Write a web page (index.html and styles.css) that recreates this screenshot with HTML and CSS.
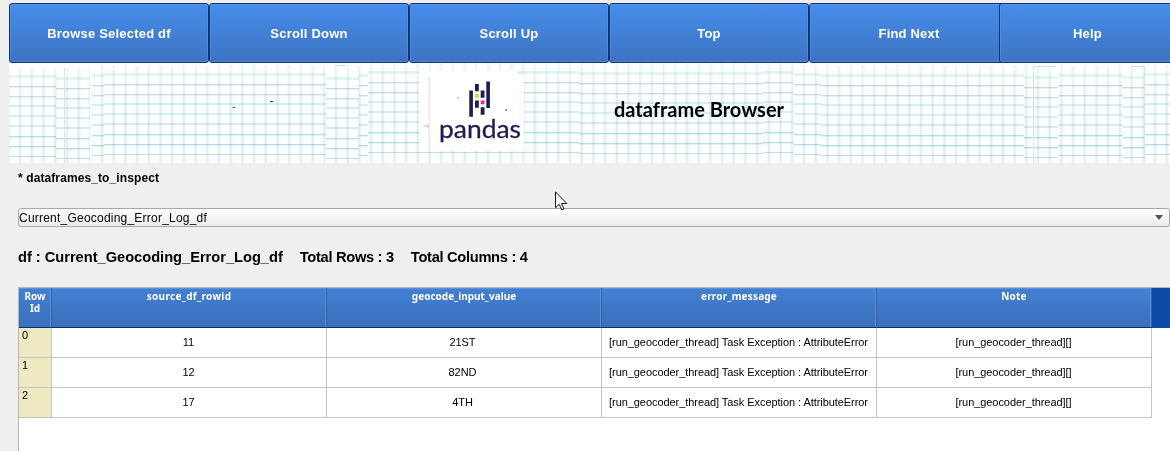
FILE: index.html
```html
<!DOCTYPE html>
<html lang="en">
<head>
<meta charset="utf-8">
<title>dataframe Browser</title>
<link rel="stylesheet" href="styles.css">
</head>
<body>
<nav class="toolbar">
  <button class="tool">Browse Selected df</button>
  <button class="tool">Scroll Down</button>
  <button class="tool">Scroll Up</button>
  <button class="tool">Top</button>
  <button class="tool">Find Next</button>
  <button class="tool tool-last">Help</button>
</nav>
<header class="banner">
  <svg class="paper" width="1161" height="100" viewBox="9 63 1161 100">
    <defs>
      <pattern id="cols" width="23.4" height="100" x="112" y="63" patternUnits="userSpaceOnUse">
        <rect width="23.4" height="100" fill="#fcfefe"/>
        <rect x="0" width="3.500" height="100" fill="#eef6f5"/>
        <rect x="1" width="1.300" height="100" fill="#dbebe8"/>
        <rect x="11.7" width="3.500" height="100" fill="#f1f5f6"/>
        <rect x="12.7" width="1.300" height="100" fill="#dfe6e8"/>
      </pattern>
      <linearGradient id="tint" x1="0" y1="0" x2="0" y2="1">
        <stop offset="0" stop-color="#fff" stop-opacity=".5"/>
        <stop offset=".4" stop-color="#f4fdff" stop-opacity=".15"/>
        <stop offset="1" stop-color="#f0fffb" stop-opacity=".15"/>
      </linearGradient>
      <symbol id="rows" width="600" height="100" viewBox="0 0 600 100" preserveAspectRatio="none">
        <path d="M0 9h600v3H0z" fill="#e6f6f6"/>
        <path d="M0 20h600v1H0z" fill="#d0dade"/>
        <path d="M0 21h600v1H0zM0 31h600v1H0z" fill="#eff4f5"/>
        <path d="M0 30h600v1H0z" fill="#d4dee2"/>
        <path d="M0 39h600v2H0z" fill="#daf0f7"/>
        <path d="M0 49h600v2H0z" fill="#dbf2f6"/>
        <path d="M0 59h600v2H0z" fill="#dfecf1"/>
        <path d="M0 70h600v1H0z" fill="#b8e0ee"/>
        <path d="M0 80h600v1H0z" fill="#bbdeeb"/>
        <path d="M0 71h600v1H0zM0 81h600v1H0z" fill="#e8f6fa"/>
        <path d="M0 90h600v1H0z" fill="#ccdee4"/>
      </symbol>
      <clipPath id="c1"><path d="M9 68h47v95H9z"/></clipPath>
      <clipPath id="c2"><path d="M56 68h34v95H56zM326 66h33v97h-33zM1024 66h34v97h-34zM1123 66h22v97h-22z"/></clipPath>
      <clipPath id="c3"><path d="M92 65h12v98H92zM359 65h9v98h-9zM821 65h203v98H821zM1058 65h65v98h-65z"/></clipPath>
      <clipPath id="c4"><path d="M104 65h222v98H104zM794 65h27v98h-27zM1145 65h25v98h-25z"/></clipPath>
      <clipPath id="c5"><path d="M368 63h211v100H368zM763 63h30v100h-30z"/></clipPath>
      <clipPath id="c6"><path d="M579 63h184v100H579z"/></clipPath>
    </defs>
    <rect x="9" y="63" width="1161" height="100" fill="#fff"/>
    <path d="M9 68h81v95H9zM92 65h276v98H92zM368 63h426v100H368zM794 65h376v98H794z" fill="url(#cols)"/>
    <rect x="9" y="63" width="1161" height="100" fill="url(#tint)"/>
    <g class="lines">
      <g clip-path="url(#c1)"><use href="#rows" x="0" y="66"/></g>
      <g clip-path="url(#c2)"><use href="#rows" x="0" y="68"/><use href="#rows" x="600" y="67"/></g>
      <g clip-path="url(#c3)"><use href="#rows" x="0" y="65"/><use href="#rows" x="600" y="65"/></g>
      <g clip-path="url(#c4)"><use href="#rows" x="0" y="64"/><use href="#rows" x="600" y="64"/></g>
      <g clip-path="url(#c5)"><use href="#rows" x="0" y="62"/><use href="#rows" x="600" y="62"/></g>
      <g clip-path="url(#c6)"><use href="#rows" x="200" y="63"/></g>
    </g>
    <path d="M64.500 68v95M1033.500 66v97M1144.500 66v97" stroke="#dde4e4"/>
    <path d="M335 65.500h11M1034 66.500h22M1131 66.500h13" stroke="#d5dcdc"/>
    <path d="M232.500 107h2.500v1h-2.500z" fill="#754c59"/>
    <path d="M270 101h3v1h-3z" fill="#434356"/>
  </svg>
  <svg class="logo" width="106" height="82" viewBox="419 71 106 82">
    <path d="M419 71h98v4h7v76H419z" fill="#fff"/>
    <path d="M429.300 77v74" stroke="#ededed" stroke-width="2"/>
    <path d="M422 126l7-2v4z" fill="#e6d8c4"/>
    <g fill="#1f1a50">
      <path d="M469.300 90.500h3.600v26.200h-3.600zM486.300 81.500h3.600v26.500h-3.600zM475 84h3.800v7.200H475zM475 100.500h3.800v7.300H475zM480.700 90.500h3.800v7.200h-3.800zM480.700 107.200h3.800v7.500h-3.800z"/>
    </g>
    <path d="M475 94h3.800v3.800H475z" fill="#ffcb30"/>
    <path d="M480.700 100.500h3.800v3.800h-3.800z" fill="#e72a90"/>
    <path d="M457 97h2v1.500h-2z" fill="#c5c5c5"/>
    <path d="M505.300 109h1.700v2h-1.700z" fill="#82828c"/>
    <text class="logo-text" x="439" y="138" textLength="82" lengthAdjust="spacingAndGlyphs">pandas</text>
  </svg>
  <h1 class="title">dataframe Browser</h1>
</header>
<main class="content">
  <label class="field-label">* dataframes_to_inspect</label>
  <div class="select">
    <span>Current_Geocoding_Error_Log_df</span>
    <svg width="8" height="5" viewBox="0 0 8 5"><path d="M0 0h8L4.500 4.500h-1z" fill="#555"/></svg>
  </div>
  <div class="summary"><span class="name">df : Current_Geocoding_Error_Log_df</span><span class="count">Total Rows : 3</span><span class="count">Total Columns : 4</span></div>
  <div class="grid">
    <div class="row head">
      <div>Row<br>Id</div><div class="wide">source_df_rowid</div><div>geocode_input_value</div><div class="medium">error_message</div><div class="medium">Note</div><div class="filler"></div>
    </div>
    <div class="row"><div class="id">0</div><div>11</div><div class="value">21ST</div><div>[run_geocoder_thread] Task Exception : AttributeError</div><div>[run_geocoder_thread][]</div></div>
    <div class="row"><div class="id">1</div><div>12</div><div class="value">82ND</div><div>[run_geocoder_thread] Task Exception : AttributeError</div><div>[run_geocoder_thread][]</div></div>
    <div class="row"><div class="id">2</div><div>17</div><div class="value">4TH</div><div>[run_geocoder_thread] Task Exception : AttributeError</div><div>[run_geocoder_thread][]</div></div>
  </div>
</main>
<svg class="cursor" width="13" height="20" viewBox="0 0 13 20"><path d="M.5.8v16l3.700-3.500 2.700 5.700 2.200-1-2.600-5.500h5.300z" fill="#fff" stroke="#171722"/></svg>
</body>
</html>
```
FILE: styles.css
```css
* { box-sizing: border-box; }
body {
  margin: 0;
  width: 1170px;
  height: 451px;
  overflow: hidden;
  background: #efefef;
  color: #000;
  font-family: "Liberation Sans", Arial, sans-serif;
}
.toolbar {
  display: flex;
  height: 63px;
  padding: 3px 0 0 9px;
}
.tool {
  flex: 0 0 200px;
  height: 60px;
  padding: 1px 0 0;
  border: 1px solid #0b3674;
  border-radius: 3px;
  background: linear-gradient(#478dec, #3c73c1);
  box-shadow: inset 0 0 0 1px rgba(105, 160, 235, .4);
  color: #fff;
  font: bold 13px "Liberation Sans", Arial, sans-serif;
  letter-spacing: .2px;
}
.tool-last {
  flex-basis: 177px;
  margin-left: -10px;
}
.banner {
  display: grid;
  grid-template-columns: 410px 195px 1fr;
  height: 100px;
  margin-left: 9px;
}
.paper {
  grid-area: 1 / 1 / 2 / 4;
  display: block;
}
.lines { mix-blend-mode: multiply; }
.logo {
  grid-area: 1 / 2;
  margin-top: 8px;
  z-index: 1;
}
.logo-text {
  font: 25px Lato, sans-serif;
  fill: #211c50;
  stroke: #211c50;
  stroke-width: .3px;
}
.title {
  grid-area: 1 / 3;
  z-index: 1;
  margin: 34px 0 0;
  font: bold 20px/24px Lato, sans-serif;
  white-space: nowrap;
}
.content { padding-left: 18px; }
.field-label {
  display: block;
  height: 45px;
  padding-top: 7px;
  font-size: 12px;
  font-weight: bold;
  line-height: 16px;
  letter-spacing: .1px;
}
.select {
  display: flex;
  align-items: center;
  justify-content: space-between;
  height: 19px;
  padding-right: 6px;
  border: 1px solid #a8a8a8;
  border-radius: 3px;
  background: linear-gradient(#fff, #ececec);
  font-size: 12px;
  letter-spacing: .22px;
}
.summary {
  display: flex;
  gap: 17px;
  height: 60px;
  padding-top: 21px;
  font-size: 14.67px;
  font-weight: bold;
  line-height: 18px;
}
.name { letter-spacing: -.02px; }
.count { letter-spacing: -.3px; }
.grid {
  height: 170px;
  border: 1px solid #b5b5b5;
  border-width: 1px 0 0 1px;
  background: #fff;
}
.row {
  display: grid;
  grid-template-columns: 33px repeat(4, 275px) 1fr;
  height: 30px;
  font-size: 11px;
  line-height: 29px;
  letter-spacing: -.06px;
  text-align: center;
}
.row > div {
  padding-right: 1px;
  border-right: 1px solid #c4c4c4;
  border-bottom: 1px solid #c4c4c4;
  white-space: nowrap;
}
.row > .id {
  padding-left: 3px;
  background: #efeac1;
  line-height: 15px;
  text-align: left;
}
.row > .value { padding-right: 3px; }
.head {
  height: 40px;
  color: #fff;
  font: bold 10px/12px "Noto Sans", sans-serif;
  letter-spacing: 0;
}
.head > div {
  padding: 2px 0 0;
  border-right-color: #315f9f;
  border-bottom-color: #082e74;
  background: linear-gradient(#437fd3, #3a70bb);
  box-shadow: inset -1px 1px #5b91da;
}
.head > .wide { letter-spacing: .33px; }
.head > .medium { letter-spacing: .18px; }
.head > .filler {
  border: 0;
  background: #0c4ba8;
  box-shadow: none;
}
.cursor {
  position: absolute;
  left: 555px;
  top: 191px;
}
```
